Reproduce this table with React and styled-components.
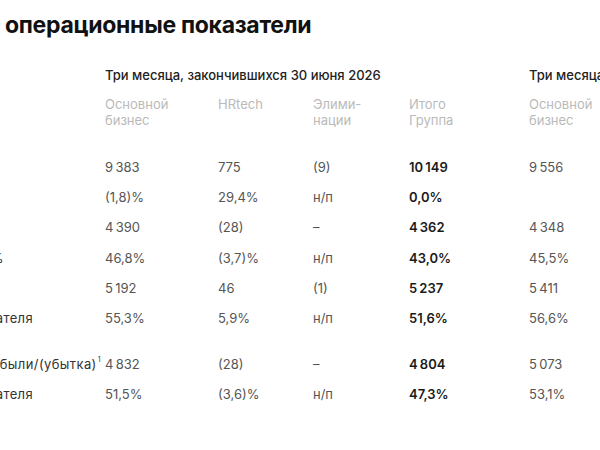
import React from "react";
import styled, { createGlobalStyle } from "styled-components";

const Global = createGlobalStyle`
  html, body { margin: 0; padding: 0; background: #fff; overflow: hidden; }
  body { font-family: Inter, "Noto Sans", sans-serif; }
`;

const Page = styled.div`
  width: 600px;
  height: 450px;
  overflow: hidden;
  padding-top: 11px;
  box-sizing: border-box;
`;

const Title = styled.h1`
  margin: 0 0 0 5px;
  font-size: 23px;
  line-height: 28px;
  font-weight: 700;
  letter-spacing: -0.3px;
  color: #111;
  white-space: nowrap;
`;

const Table = styled.div`
  margin-left: -300px;
  margin-top: 28px;
  display: flex;
  flex-direction: column;
`;

const cols = "405px 113px 95px 96px 120px 200px";

const GroupRow = styled.div`
  display: grid;
  grid-template-columns: ${cols};
  font-size: 13px;
  line-height: 16px;
  font-weight: 500;
  color: #222;
  white-space: nowrap;
`;

const GroupCell = styled.div`
  grid-column: ${(p) => p.$span};
`;

const SubRow = styled.div`
  display: grid;
  grid-template-columns: ${cols};
  margin-top: 13px;
  margin-bottom: 24px;
  font-size: 13px;
  line-height: 16px;
  color: #bababa;
`;

const SubCell = styled.div`
  grid-column: ${(p) => p.$col};
  white-space: nowrap;
`;

const DataRow = styled.div`
  display: grid;
  grid-template-columns: ${cols};
  height: 30.2px;
  align-items: center;
  margin-top: ${(p) => (p.$gap ? "16px" : "0")};
  font-size: 13px;
  color: #555;
  white-space: nowrap;
`;

const Label = styled.div`
  text-align: right;
  padding-right: ${(p) => p.$pad}px;
  color: #333;
  letter-spacing: 0.4px;
  overflow: hidden;
`;

const Cell = styled.div`
  font-weight: ${(p) => (p.$bold ? 600 : 400)};
  color: ${(p) => (p.$bold ? "#1a1a1a" : "#555")};
`;

const Sup = styled.sup`
  font-size: 7px;
  vertical-align: top;
  line-height: 1;
  margin-left: 1px;
`;

const N = "\u202F";

const rows = [
  { label: "Выручка", pad: 140, v: [`9${N}383`, "775", "(9)", `10${N}149`, `9${N}556`] },
  { label: "Рост выручки, год к году", pad: 140, v: ["(1,8)%", "29,4%", "н/п", "0,0%", ""] },
  { label: "OIBDA", pad: 140, v: [`4${N}390`, "(28)", "–", `4${N}362`, `4${N}348`] },
  { label: "Рентабельность OIBDA, %", pad: 101, v: ["46,8%", "(3,7)%", "н/п", "43,0%", "45,5%"] },
  { label: "Скорректированная OIBDA", pad: 140, v: [`5${N}192`, "46", "(1)", `5${N}237`, `5${N}411`] },
  { label: "Рентабельность скорректированного показателя", pad: 74, v: ["55,3%", "5,9%", "н/п", "51,6%", "56,6%"] },
  { label: <>Скорректированной чистой прибыли/(убытка)<Sup>1</Sup></>, pad: 4, gap: true, v: [`4${N}832`, "(28)", "–", `4${N}804`, `5${N}073`] },
  { label: "Рентабельность скорректированного показателя", pad: 74, v: ["51,5%", "(3,6)%", "н/п", "47,3%", "53,1%"] },
];

export default function App() {
  return (
    <Page>
      <Global />
      <Title>операционные показатели</Title>
      <Table>
        <GroupRow>
          <GroupCell $span="2 / 6">Три месяца, закончившихся 30 июня 2026</GroupCell>
          <GroupCell $span="6 / 7">Три месяца, закончившихся 30 июня 2025</GroupCell>
        </GroupRow>
        <SubRow>
          <SubCell $col="2">Основной<br />бизнес</SubCell>
          <SubCell $col="3">HRtech</SubCell>
          <SubCell $col="4">Элими-<br />нации</SubCell>
          <SubCell $col="5">Итого<br />Группа</SubCell>
          <SubCell $col="6">Основной<br />бизнес</SubCell>
        </SubRow>
        {rows.map((r, i) => (
          <DataRow key={i} $gap={r.gap}>
            <Label $pad={r.pad}>{r.label}</Label>
            <Cell>{r.v[0]}</Cell>
            <Cell>{r.v[1]}</Cell>
            <Cell>{r.v[2]}</Cell>
            <Cell $bold>{r.v[3]}</Cell>
            <Cell>{r.v[4]}</Cell>
          </DataRow>
        ))}
      </Table>
    </Page>
  );
}
